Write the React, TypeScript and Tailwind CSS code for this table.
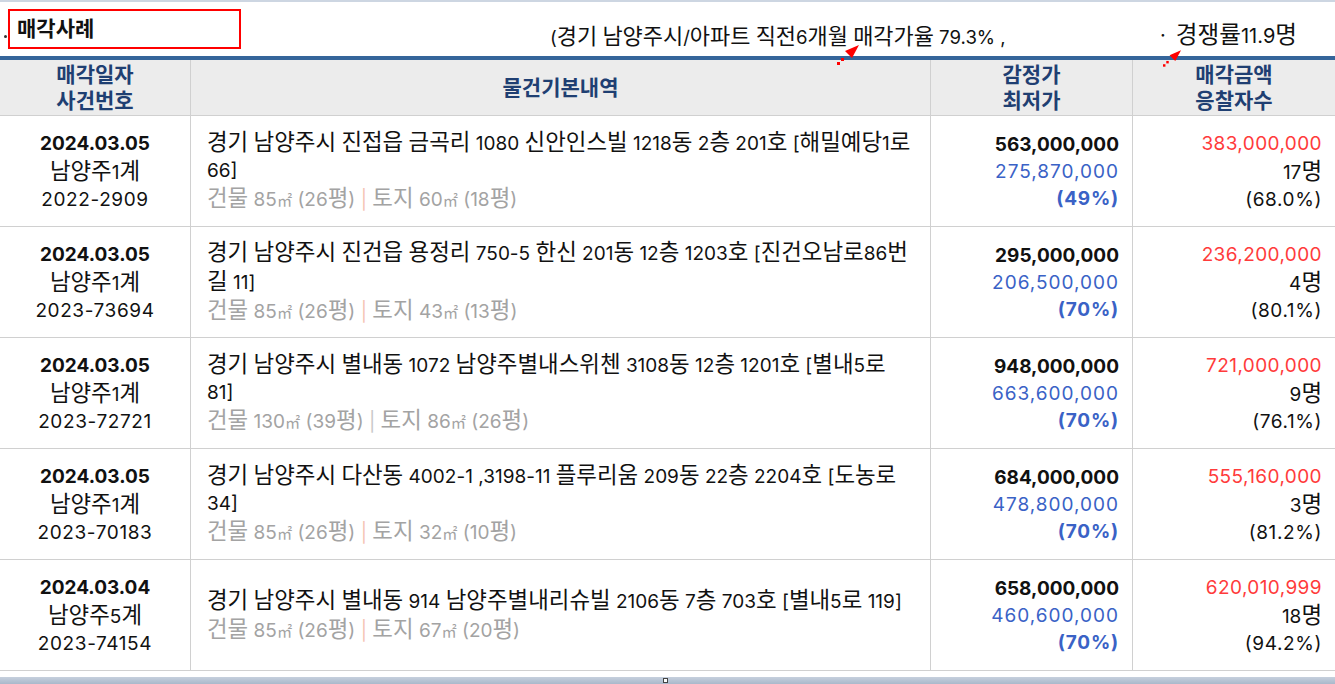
import React from "react";

type Row = {
  date: string;
  court: string;
  caseNo: string;
  addr: string[];
  building: string;
  land: string;
  pipeGray?: boolean;
  appraisal: string;
  minimum: string;
  pct: string;
  sale: string;
  bidders: string;
  ratio: string;
};

const rows: Row[] = [
  {
    date: "2024.03.05",
    court: "남양주1계",
    caseNo: "2022-2909",
    addr: ["경기 남양주시 진접읍 금곡리 1080 신안인스빌 1218동 2층 201호 [해밀예당1로", "66]"],
    building: "건물 85㎡ (26평)",
    land: "토지 60㎡ (18평)",
    appraisal: "563,000,000",
    minimum: "275,870,000",
    pct: "(49%)",
    sale: "383,000,000",
    bidders: "17명",
    ratio: "(68.0%)",
  },
  {
    date: "2024.03.05",
    court: "남양주1계",
    caseNo: "2023-73694",
    addr: ["경기 남양주시 진건읍 용정리 750-5 한신 201동 12층 1203호 [진건오남로86번", "길 11]"],
    building: "건물 85㎡ (26평)",
    land: "토지 43㎡ (13평)",
    appraisal: "295,000,000",
    minimum: "206,500,000",
    pct: "(70%)",
    sale: "236,200,000",
    bidders: "4명",
    ratio: "(80.1%)",
  },
  {
    date: "2024.03.05",
    court: "남양주1계",
    caseNo: "2023-72721",
    addr: ["경기 남양주시 별내동 1072 남양주별내스위첸 3108동 12층 1201호 [별내5로", "81]"],
    building: "건물 130㎡ (39평)",
    land: "토지 86㎡ (26평)",
    pipeGray: true,
    appraisal: "948,000,000",
    minimum: "663,600,000",
    pct: "(70%)",
    sale: "721,000,000",
    bidders: "9명",
    ratio: "(76.1%)",
  },
  {
    date: "2024.03.05",
    court: "남양주1계",
    caseNo: "2023-70183",
    addr: ["경기 남양주시 다산동 4002-1 ,3198-11 플루리움 209동 22층 2204호 [도농로", "34]"],
    building: "건물 85㎡ (26평)",
    land: "토지 32㎡ (10평)",
    appraisal: "684,000,000",
    minimum: "478,800,000",
    pct: "(70%)",
    sale: "555,160,000",
    bidders: "3명",
    ratio: "(81.2%)",
  },
  {
    date: "2024.03.04",
    court: "남양주5계",
    caseNo: "2023-74154",
    addr: ["경기 남양주시 별내동 914 남양주별내리슈빌 2106동 7층 703호 [별내5로 119]"],
    building: "건물 85㎡ (26평)",
    land: "토지 67㎡ (20평)",
    appraisal: "658,000,000",
    minimum: "460,600,000",
    pct: "(70%)",
    sale: "620,010,999",
    bidders: "18명",
    ratio: "(94.2%)",
  },
];

// Hangul glyphs are drawn somewhat larger than Latin digits, as in the reference font.
function K({ t }: { t: string }) {
  const parts = t.split(/([가-힣]+|㎡)/);
  return (
    <>
      {parts.map((s, i) =>
        s === "㎡" ? (
          <span key={i} className="text-[0.8em]">
            {s}
          </span>
        ) : /[가-힣]/.test(s) ? (
          <span key={i} className="text-[1.18em]">
            {s}
          </span>
        ) : (
          <React.Fragment key={i}>{s}</React.Fragment>
        )
      )}
    </>
  );
}

function Arrow({ w, h }: { w: number; h: number }) {
  return (
    <svg width={w} height={h} viewBox="0 0 22 20" className="block">
      <rect x="0" y="17" width="3" height="3" fill="#ff0000" />
      <rect x="4" y="13" width="3" height="3" fill="#ff0000" />
      <polygon points="22,0 8,6 15,13" fill="#ff0000" />
    </svg>
  );
}

export default function App() {
  return (
    <div
      className="w-[1335px] h-[684px] bg-white overflow-hidden flex flex-col text-[#111]"
      style={{ fontFamily: 'Inter, "Noto Sans CJK KR", "Noto Sans", sans-serif' }}
    >
      <div className="h-[2px] bg-[#cdd6e2]" />
      {/* title bar */}
      <div className="h-[55px] flex items-start relative">
        <div className="w-[3px] h-[3px] bg-[#333] rounded-full absolute left-[4px] top-[33px]" />
        <div className="ml-[8px] mt-[7px] w-[233px] h-[40px] border-2 border-[#ff0000] flex items-center pl-[7px]">
          <span className="text-[21px] font-bold leading-none">매각사례</span>
        </div>
        <div className="ml-[309px] mt-[20px] text-[18.6px] leading-[28px] whitespace-nowrap">
          <K t="(경기 남양주시/아파트 직전6개월 매각가율 79.3% ," />
        </div>
        <div className="ml-auto mr-[38px] mt-[19px] text-[20px] leading-[28px] whitespace-nowrap flex">
          <span className="mr-[10px]">·</span>
          <span>
            <K t="경쟁률11.9명" />
          </span>
        </div>
        <div className="absolute left-[837px] top-[43px]">
          <Arrow w={22} h={20} />
        </div>
        <div className="absolute left-[1163px] top-[48px]">
          <Arrow w={18} h={17} />
        </div>
      </div>
      <div className="h-[4px] bg-[#35659a]" />
      {/* table */}
      <div className="grid grid-cols-[191px_740px_202px_202px]">
        {/* header */}
        <div className="h-[56px] bg-[#ececec] border-b border-r border-[#d0d0d0] flex flex-col items-center justify-center text-[21px] font-bold text-[#1f3f72] leading-[26px]">
          <span>매각일자</span>
          <span>사건번호</span>
        </div>
        <div className="h-[56px] bg-[#ececec] border-b border-r border-[#d0d0d0] flex items-center justify-center text-[21px] font-bold text-[#1f3f72]">
          물건기본내역
        </div>
        <div className="h-[56px] bg-[#ececec] border-b border-r border-[#d0d0d0] flex flex-col items-center justify-center text-[21px] font-bold text-[#1f3f72] leading-[26px]">
          <span>감정가</span>
          <span>최저가</span>
        </div>
        <div className="h-[56px] bg-[#ececec] border-b border-[#d0d0d0] flex flex-col items-center justify-center text-[21px] font-bold text-[#1f3f72] leading-[26px]">
          <span>매각금액</span>
          <span>응찰자수</span>
        </div>
        {rows.map((r, i) => (
          <React.Fragment key={i}>
            <div className="h-[111px] border-b border-r border-[#d0d0d0] flex flex-col items-center justify-center text-[19px] leading-[27px]">
              <span className="font-bold">{r.date}</span>
              <span>
                <K t={r.court} />
              </span>
              <span className="tracking-[0.6px]">{r.caseNo}</span>
            </div>
            <div className="h-[111px] border-b border-r border-[#d0d0d0] flex flex-col justify-center pl-[16px] text-[19px] leading-[27px] whitespace-nowrap">
              {r.addr.map((a, j) => (
                <span key={j}>
                  <K t={a} />
                </span>
              ))}
              <span className="text-[#a3a3a3]">
                <K t={r.building} />{" "}
                <span className={r.pipeGray ? "text-[#c8c8c8]" : "text-[#f5c3b3]"}>|</span>{" "}
                <K t={r.land} />
              </span>
            </div>
            <div className="h-[111px] border-b border-r border-[#d0d0d0] flex flex-col items-end justify-center pr-[13px] text-[19px] leading-[27px]">
              <span className="font-bold text-[#111]">{r.appraisal}</span>
              <span className="text-[#3a62c6] tracking-[1px]">{r.minimum}</span>
              <span className="font-bold text-[#3a62c6] tracking-[0.8px]">{r.pct}</span>
            </div>
            <div className="h-[111px] border-b border-[#d0d0d0] flex flex-col items-end justify-center pr-[13px] text-[19px] leading-[27px]">
              <span className="text-[#ff3b3b] tracking-[0.4px]">{r.sale}</span>
              <span>
                <K t={r.bidders} />
              </span>
              <span className="tracking-[0.6px]">{r.ratio}</span>
            </div>
          </React.Fragment>
        ))}
      </div>
      <div className="h-[6px]" />
      <div className="h-[7px] bg-gradient-to-b from-[#c6d0dd] to-[#aab8cb] flex justify-center items-center">
        <div className="w-[5px] h-[5px] border border-[#444] bg-white ml-[-4px]" />
      </div>
    </div>
  );
}
